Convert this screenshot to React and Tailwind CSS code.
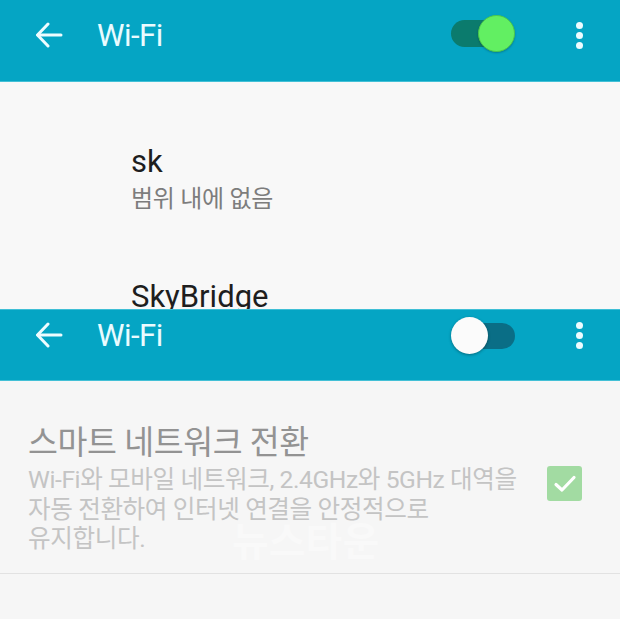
import React from "react";

const FONT = { fontFamily: 'Roboto, "Noto Sans CJK KR", sans-serif' };

function BackArrow() {
  return (
    <svg width="28" height="26" viewBox="0 0 28 26" fill="none" stroke="#eefcff" strokeWidth="3" strokeLinecap="round" strokeLinejoin="round">
      <path d="M26 13H3" />
      <path d="M13 2L2.5 13L13 24" />
    </svg>
  );
}

function Dots() {
  return (
    <div className="flex flex-col items-center gap-[3px]">
      <div className="w-[7px] h-[7px] rounded-full bg-[#eefcff]" />
      <div className="w-[7px] h-[7px] rounded-full bg-[#eefcff]" />
      <div className="w-[7px] h-[7px] rounded-full bg-[#eefcff]" />
    </div>
  );
}

function ToggleOn() {
  return (
    <div className="relative w-[64px] h-[37px] -mt-[4px]">
      <div className="absolute left-0 top-[5px] w-[46px] h-[27px] rounded-full bg-[#0b7b6d]" />
      <div className="absolute right-0 top-0 w-[37px] h-[37px] rounded-full bg-[#62ef62] border border-[#4cc94c] shadow-[0_1px_2px_rgba(0,0,0,0.25)]" />
    </div>
  );
}

function ToggleOff() {
  return (
    <div className="relative w-[64px] h-[37px]">
      <div className="absolute right-0 top-[6px] w-[48px] h-[26px] rounded-full bg-[#0a6e86]" />
      <div className="absolute left-0 top-0 w-[37px] h-[37px] rounded-full bg-[#fbfbfb] shadow-[0_1px_3px_rgba(0,0,0,0.35)]" />
    </div>
  );
}

function Header({ on, rowClass, extra }) {
  return (
    <div className={`shrink-0 bg-[#05a5c4] ${extra}`}>
      <div className={`flex items-center pl-[35px] pr-[37px] ${rowClass}`}>
        <BackArrow />
        <div className="ml-[34px] text-[31px] text-[#eafbff] leading-none tracking-[-0.5px]">Wi-Fi</div>
        <div className="ml-auto">{on ? <ToggleOn /> : <ToggleOff />}</div>
        <div className="ml-[61px]">
          <Dots />
        </div>
      </div>
    </div>
  );
}

export default function App() {
  return (
    <div className="w-[620px] h-[619px] overflow-hidden bg-[#f6f6f6]" style={FONT}>
      <div className="h-[309px] overflow-hidden bg-[#f8f8f8] flex flex-col">
        <Header on rowClass="h-[70px]" extra="h-[82px] border-b border-[#43c0d6]" />
        <div className="shrink-0 pl-[131px] pt-[63px]">
          <div className="text-[31px] leading-[34px] text-[#1e1e1e]">sk</div>
          <div className="mt-[5px] text-[24px] leading-[30px] text-[#7d7d7d] tracking-[-0.3px]">범위 내에 없음</div>
          <div className="mt-[66px] text-[31px] leading-[34px] text-[#1e1e1e]">SkyBridge</div>
        </div>
      </div>
      <div className="relative">
        <Header rowClass="h-[50px]" extra="h-[72px] border-t border-[#3fbfd6] border-b border-b-[#43c0d6]" />
        <div className="pl-[28px] pr-[38px] pt-[44px]">
          <div className="text-[32.5px] leading-[36px] text-[#939393] tracking-[-0.4px]">스마트 네트워크 전환</div>
          <div className="flex items-start justify-between mt-[4px]">
            <div className="text-[24.6px] leading-[29.5px] text-[#c4c4c4] tracking-[-0.4px] whitespace-nowrap">
              Wi-Fi와 모바일 네트워크, 2.4GHz와 5GHz 대역을
              <br />
              자동 전환하여 인터넷 연결을 안정적으로
              <br />
              유지합니다.
            </div>
            <div className="mt-[1px] w-[35px] h-[35px] rounded-[3px] bg-[#a2dba2] flex items-center justify-center">
              <svg width="24" height="20" viewBox="0 0 24 20" fill="none" stroke="#ffffff" strokeWidth="3.2" strokeLinecap="round" strokeLinejoin="round">
                <path d="M3 10.5L9 16L21 3.5" />
              </svg>
            </div>
          </div>
        </div>
        <div className="mt-[19px] h-px bg-[#e2e2e2]" />
        <div className="absolute left-[232px] top-[214px] text-[40px] font-bold text-[#f9f9f9] leading-none pointer-events-none">뉴스타운</div>
      </div>
    </div>
  );
}
